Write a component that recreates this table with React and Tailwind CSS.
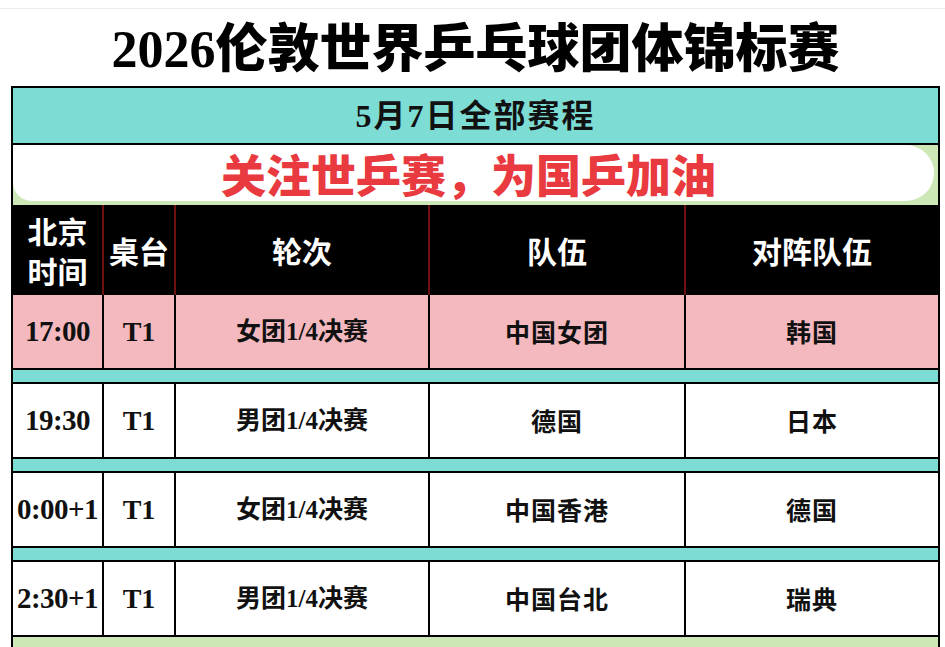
const serif = "font-['Liberation_Serif','Noto_Sans_CJK_SC',serif]"
const sans = "font-['Noto_Sans_CJK_SC','Noto_Sans',sans-serif]"

const rows = [
  { time: "17:00", table: "T1", round: "女团1/4决赛", team: "中国女团", rival: "韩国", bg: "bg-[#f4b9be]" },
  { time: "19:30", table: "T1", round: "男团1/4决赛", team: "德国", rival: "日本", bg: "bg-white" },
  { time: "0:00+1", table: "T1", round: "女团1/4决赛", team: "中国香港", rival: "德国", bg: "bg-white" },
  { time: "2:30+1", table: "T1", round: "男团1/4决赛", team: "中国台北", rival: "瑞典", bg: "bg-white" },
]

function Row({ r }) {
  return (
    <div className={`grid h-[75px] grid-cols-[91px_72px_254px_256px_1fr] border-b-2 border-black ${r.bg}`}>
      <div className={`flex items-center justify-center border-r-2 border-black text-[29px] font-bold tracking-[-0.5px] text-[#111] ${serif}`}>
        {r.time}
      </div>
      <div className={`flex items-center justify-center border-r-2 border-black text-[28px] font-bold text-[#111] ${serif}`}>
        {r.table}
      </div>
      <div className={`flex items-center justify-center border-r-2 border-black text-[25px] font-bold text-[#111] ${serif}`}>
        {r.round}
      </div>
      <div className={`flex items-center justify-center border-r-2 border-black text-[25px] font-bold tracking-[1px] text-[#111] ${sans}`}>
        {r.team}
      </div>
      <div className={`flex items-center justify-center text-[25px] font-bold tracking-[1px] text-[#111] ${sans}`}>
        {r.rival}
      </div>
    </div>
  )
}

function Gap() {
  return <div className="h-[14px] border-b-2 border-black bg-[#7ddcd4]" />
}

export default function App() {
  return (
    <div className="h-[647px] w-[945px] overflow-hidden bg-white">
      <div className="pt-[8px]">
        <div className="border-t border-[#ececec]">
          <div className="pl-[11px] pr-[5px]">
            <div className={`flex h-[77px] items-center justify-center pt-[4px] text-[52px] leading-none font-black text-black ${serif}`}>
              2026伦敦世界乒乓球团体锦标赛
            </div>

            <div className="border-x-2 border-black">
              <div className={`flex h-[59px] items-center justify-center border-t-2 border-b-2 border-black bg-[#7ddcd4] text-[32px] leading-none font-bold tracking-[2px] text-[#111] ${serif}`}>
                5月7日全部赛程
              </div>

              <div className="flex h-[60px] bg-[#cde7b6] pb-[4px] pr-[4px]">
                <div className={`flex flex-1 items-center justify-center rounded-r-[30px] rounded-bl-[20px] bg-white pr-[10px] text-[45px] leading-none font-black text-[#e83a3f] ${sans}`}>
                  关注世乒赛，为国乒加油
                </div>
              </div>

              <div className={`grid h-[90px] grid-cols-[91px_72px_254px_256px_1fr] bg-black text-white ${sans}`}>
                <div className="flex flex-col items-center justify-center border-r-2 border-[#6e1010] text-[30px] leading-[40px] font-bold">
                  <span>北京</span>
                  <span>时间</span>
                </div>
                <div className="flex items-center justify-center border-r-2 border-[#6e1010] text-[30px] font-bold">桌台</div>
                <div className="flex items-center justify-center border-r-2 border-[#6e1010] text-[30px] font-bold">轮次</div>
                <div className="flex items-center justify-center border-r-2 border-[#6e1010] text-[30px] font-bold">队伍</div>
                <div className="flex items-center justify-center text-[30px] font-bold">对阵队伍</div>
              </div>

              <Row r={rows[0]} />
              <Gap />
              <Row r={rows[1]} />
              <Gap />
              <Row r={rows[2]} />
              <Gap />
              <Row r={rows[3]} />
              <div className="h-[20px] bg-[#cde7b6]" />
            </div>
          </div>
        </div>
      </div>
    </div>
  )
}
